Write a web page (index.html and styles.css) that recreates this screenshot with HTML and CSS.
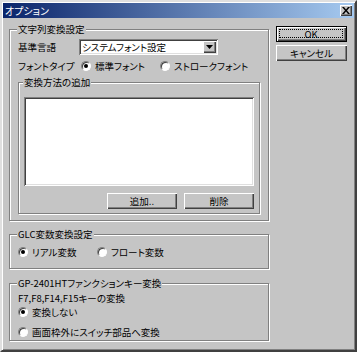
FILE: index.html
```html
<!DOCTYPE html>
<html lang="ja">
<head>
    <meta charset="UTF-8">
    <title>オプション</title>
    <link rel="stylesheet" href="styles.css">
</head>
<body>
    <div class="window">
        <div class="titlebar">
            <span class="title">オプション</span>
            <span class="close-btn">
                <svg width="8" height="7" viewBox="0 0 8 7"><path d="M0 0h2l2 2.4L6 0h2L5 3.5 8 7H6L4 4.6 2 7H0l3-3.5z"/></svg>
            </span>
        </div>
        <div class="dialog">
            <div class="settings">
                <fieldset class="group group-text">
                    <legend>文字列変換設定</legend>
                    <div class="row row-lang">
                        <span class="label">基準言語</span>
                        <div class="combo">
                            <span class="combo-text">システムフォント設定</span>
                            <span class="combo-arrow">
                                <svg width="7" height="4" viewBox="0 0 7 4"><path d="M0 0h7L3.5 4z"/></svg>
                            </span>
                        </div>
                    </div>
                    <div class="row row-font">
                        <span class="label">フォントタイプ</span>
                        <label class="option option-first option-indent"><span class="radio checked"></span>標準フォント</label>
                        <label class="option"><span class="radio"></span>ストロークフォント</label>
                    </div>
                    <fieldset class="group group-inner">
                        <legend>変換方法の追加</legend>
                        <div class="listbox"></div>
                        <div class="list-actions">
                            <button class="btn">追加..</button>
                            <button class="btn">削除</button>
                        </div>
                    </fieldset>
                </fieldset>

                <fieldset class="group group-glc">
                    <legend>GLC変数変換設定</legend>
                    <div class="row row-glc">
                        <label class="option option-first"><span class="radio checked"></span>リアル変数</label>
                        <label class="option"><span class="radio"></span>フロート変数</label>
                    </div>
                </fieldset>

                <fieldset class="group group-key">
                    <legend>GP-2401HTファンクションキー変換</legend>
                    <div class="key-caption">F7,F8,F14,F15キーの変換</div>
                    <label class="option option-line"><span class="radio checked"></span>変換しない</label>
                    <label class="option option-line option-last"><span class="radio"></span>画面枠外にスイッチ部品へ変換</label>
                </fieldset>
            </div>
            <div class="actions">
                <button class="btn btn-default"><span class="focus">OK</span></button>
                <button class="btn">キャンセル</button>
            </div>
        </div>
    </div>
</body>
</html>
```

FILE: styles.css
```css
* {
    margin: 0;
    padding: 0;
    box-sizing: border-box;
}
body {
    background: #fff;
    font-family: "Noto Sans CJK JP", "Noto Sans", sans-serif;
    font-size: 9.5px;
    line-height: 12px;
    color: #000;
    font-feature-settings: "palt";
}
.window {
    width: 357px;
    height: 352px;
    background: #c5c5c5;
    border: 2px solid;
    border-color: #dfdfdf #404040 #404040 #dfdfdf;
    box-shadow: inset 1px 1px #fff, inset -1px -1px #808080;
    padding: 1px;
}
.titlebar {
    height: 15px;
    display: flex;
    align-items: center;
    justify-content: space-between;
    padding: 0 2px 0 2px;
    background: linear-gradient(to right, #0a246a, #a6caf0);
    color: #fff;
}
.title {
    font-size: 10px;
}
.close-btn {
    width: 12px;
    height: 11px;
    display: flex;
    align-items: center;
    justify-content: center;
    background: #c5c5c5;
    box-shadow: inset 1px 1px #fff, inset -1px -1px #404040, inset -2px -2px #808080;
}
.dialog {
    display: flex;
    padding: 5px 0 0 6px;
}
.settings {
    width: 260px;
    display: flex;
    flex-direction: column;
}
.actions {
    width: 71px;
    margin-left: 7px;
    padding-top: 3px;
    display: flex;
    flex-direction: column;
    gap: 3px;
}

/* group boxes */
.group {
    min-width: 0;
    border: 1px solid #808080;
    box-shadow: inset 1px 1px #fff, 1px 1px #fff;
    padding: 0 8px;
}
.group legend {
    margin-left: -1px;
    padding: 0 1px;
    line-height: 12px;
    background: #c5c5c5;
}
.group-text {
    padding-bottom: 6px;
}
.group-inner {
    margin-top: 2px;
    padding: 0 5px 4px;
}
.group-glc {
    margin-top: 7px;
    padding-bottom: 8px;
}
.group-key {
    margin-top: 8px;
    padding-bottom: 1px;
}

.row {
    display: flex;
    align-items: center;
    height: 16px;
}
.row-lang {
    margin-top: 4px;
}
.row-font {
    margin-top: 3px;
}
.row-glc {
    margin-top: 4px;
}
.label {
    width: 61px;
}

/* combo box */
.combo {
    width: 139px;
    height: 16px;
    display: flex;
    align-items: center;
    padding: 2px;
    background: #fff;
    box-shadow: inset 1px 1px #808080, inset -1px -1px #fff, inset 2px 2px #404040, inset -2px -2px #dfdfdf;
}
.combo-text {
    flex: 1;
    padding-left: 1px;
}
.combo-arrow {
    width: 13px;
    height: 12px;
    display: flex;
    align-items: center;
    justify-content: center;
    background: #c5c5c5;
    box-shadow: inset 1px 1px #fff, inset -1px -1px #404040, inset -2px -2px #808080;
}

/* radio buttons */
.option {
    display: flex;
    align-items: center;
    gap: 4px;
    white-space: nowrap;
}
.option-first {
    width: 79px;
}
.option-indent {
    margin-left: 2px;
}
.radio {
    flex: none;
    width: 10px;
    height: 10px;
    display: flex;
    align-items: center;
    justify-content: center;
    border-radius: 50%;
    background: #fff;
    border: 1px solid;
    border-color: #808080 #fff #fff #808080;
    box-shadow: inset 1px 1px #404040;
}
.radio.checked::after {
    content: "";
    width: 4px;
    height: 4px;
    border-radius: 50%;
    background: #000;
}
.key-caption {
    margin-top: 3px;
    height: 12px;
}
.option-line {
    height: 14px;
    margin-top: 1px;
}
.option-last {
    margin-top: 6px;
}

/* list box */
.listbox {
    margin-top: 9px;
    height: 89px;
    background: #fff;
    box-shadow: inset 1px 1px #808080, inset -1px -1px #fff, inset 2px 2px #404040, inset -2px -2px #dfdfdf;
}
.list-actions {
    display: flex;
    justify-content: flex-end;
    gap: 7px;
    margin-top: 7px;
}
.list-actions .btn {
    width: 70px;
}

/* push buttons */
.btn {
    height: 16px;
    display: flex;
    align-items: center;
    justify-content: center;
    border: none;
    background: #c5c5c5;
    color: #000;
    font-family: inherit;
    font-size: inherit;
    line-height: inherit;
    font-feature-settings: "palt";
    box-shadow: inset 1px 1px #fff, inset -1px -1px #404040, inset -2px -2px #808080;
}
.btn-default {
    border: 1px solid #000;
    padding: 2px 3px 3px 2px;
}
.focus {
    width: 100%;
    height: 100%;
    display: flex;
    align-items: center;
    justify-content: center;
    border: 1px dotted #000;
}
```
